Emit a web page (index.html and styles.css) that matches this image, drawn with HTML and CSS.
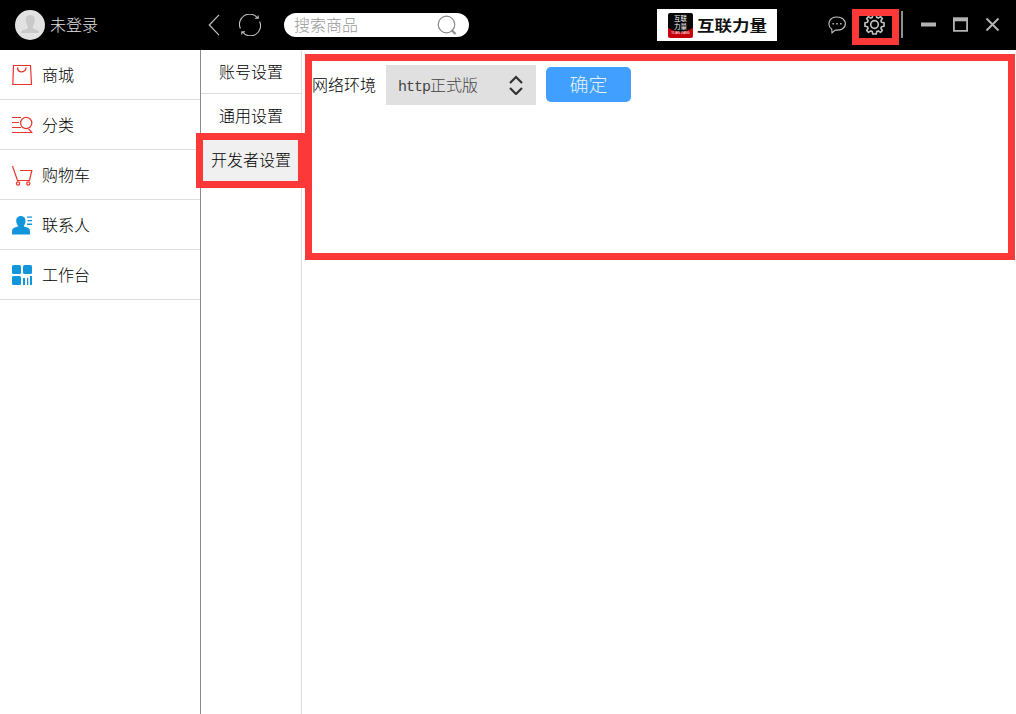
FILE: index.html
```html
<!DOCTYPE html>
<html lang="zh-CN">
<head>
<meta charset="utf-8">
<title>互联力量</title>
<link rel="stylesheet" href="styles.css">
</head>
<body>
<div class="app">
  <header class="topbar">
    <div class="user">
      <svg class="avatar" width="30" height="30" viewBox="0 0 30 30"><circle cx="15" cy="15" r="15" fill="#e2e2e2"/><path d="M10.800 9.500C10.800 3.500 19.800 3.500 19.800 9.500C19.800 12.500 19 14.500 17.800 16V18.500L22.500 20.200Q24 21 24 23H6Q6 21 7.500 20.200L12.800 18.500V16C11.600 14.500 10.800 12.500 10.800 9.500Z" fill="#c9c9c9"/></svg>
      <span class="text">未登录</span>
    </div>
    <svg class="back" width="12" height="22" viewBox="0 0 12 22"><path d="M11 .8L1.300 11L11 21.200" fill="none" stroke="#c4c4c4" stroke-width="1.200"/></svg>
    <svg class="refresh" width="22" height="22" viewBox="0 0 22 22" fill="none" stroke="#c4c4c4" stroke-width="1.100"><path d="M1.400 14.500A10.100 10.100 0 0 1 18.500 4M20.600 7.500A10.100 10.100 0 0 1 3.500 18M16 4.200H19.200V1.500M6 17.800H2.800V20.500"/></svg>
    <div class="search">
      <span class="text">搜索商品</span>
      <svg width="20" height="20" viewBox="0 0 20 20" fill="none" stroke="#8b8b8b"><circle cx="9.500" cy="9.500" r="8.300" stroke-width="1.200"/><path d="M14.500 15L18.500 19" stroke-width="2.200"/></svg>
    </div>
    <div class="brand">
      <div class="badge"><span>互联</span><span>力量</span><small>YLIAN JIANG</small></div>
      <strong>互联力量</strong>
    </div>
    <svg class="chat" width="18" height="18" viewBox="0 0 18 18"><path d="M3.800 13.200C-1.200 9.500 .4 1 9 1C14 1 17.400 4 17.400 7.600C17.400 12.500 12.500 14.800 7.300 14L4 16.800Z" fill="none" stroke="#c4c4c4" stroke-width="1.100"/><path d="M4.500 7h1.400v1.400H4.500zM8.300 7h1.400v1.400H8.300zM12.100 7h1.400v1.400h-1.400z" fill="#c4c4c4"/></svg>
    <div class="gear">
      <svg width="21" height="21" viewBox="0 0 22 22" fill="none" stroke="#c0c0c0" stroke-width="1.700" stroke-linejoin="round"><path d="M9.200 1h3.600l.6 2.700 1.500.6L17.300 2.800 19.200 4.700 17.700 7.100 18.300 8.600 21 9.200v3.600l-2.700.6-.6 1.500 1.500 2.400-1.900 1.900-2.400-1.500-1.500.6-.6 2.700H9.200l-.6-2.700-1.500-.6-2.400 1.500-1.900-1.900 1.500-2.400-.6-1.500L1 12.800V9.200l2.700-.6.6-1.500L2.800 4.700 4.700 2.800 7.100 4.300l1.500-.6z"/><circle cx="11" cy="11" r="4"/></svg>
    </div>
    <i class="divider"></i>
    <svg class="winbtns" width="80" height="16" viewBox="0 0 80 16" fill="none" stroke="#b3b3b3"><path d="M0 7.500H15" stroke-width="4"/><path d="M32.900 2V13.800H46.100V2" stroke-width="1.800"/><path d="M32 2.300H47" stroke-width="4"/><path d="M65.500 1.500L77.500 13.500M77.500 1.500L65.500 13.500" stroke-width="2"/></svg>
  </header>
  <div class="body">
    <nav class="sidebar">
      <a class="item"><svg class="line" width="22" height="22" viewBox="0 0 22 22"><path d="M2.500 1.500H18.500L19.500 20.500H.8L1.500 1.500Z"/><path d="M5.500 4.500C6.500 9 12.500 9 14 4.500M5 4h1.500M13.200 4h1.500"/></svg><span class="text">商城</span></a>
      <a class="item"><svg class="line" width="22" height="22" viewBox="0 0 22 22"><circle cx="14.200" cy="9" r="5.600"/><path d="M0 3.500H9M0 8.500H7M0 13.500H9M0 18.500H20.500M16.500 15L19.500 18"/></svg><span class="text">分类</span></a>
      <a class="item"><svg class="line" width="22" height="22" viewBox="0 0 22 22"><path d="M.5 2L5.500 16.500H17.500L19.800 6.500H8"/><circle cx="6" cy="19.500" r="1.600"/><circle cx="16.300" cy="19.500" r="1.600"/></svg><span class="text">购物车</span></a>
      <a class="item"><svg class="solid" width="22" height="22" viewBox="0 0 22 22"><path d="M4.200 6.500C4.200 .4 13.500 .4 13.500 6.500C13.500 9 12.800 10.500 12 11.500V12.500L16 13.800Q18 14.500 18 17V20.500H0V17Q0 14.500 2 13.800L6 12.500V11.500C5 10.500 4.200 9 4.200 6.500ZM15 2.500h5v1.300h-5zM15.500 6H20v1.300h-4.500zM15 9.500h5v1.500h-5z"/></svg><span class="text">联系人</span></a>
      <a class="item"><svg class="solid" width="22" height="22" viewBox="0 0 22 22"><rect y="1" width="9" height="9" rx="1.500"/><rect x="11" y="1" width="9" height="9" rx="1.500"/><rect y="12" width="9" height="9" rx="1.500"/><path d="M11 14h2v7h-2zM15 14h1.300v7H15zM18 12h2v9h-2z"/></svg><span class="text">工作台</span></a>
    </nav>
    <nav class="submenu">
      <a class="sub"><span class="text">账号设置</span></a>
      <a class="sub"><span class="text">通用设置</span></a>
      <a class="sub active"><span class="text">开发者设置</span></a>
    </nav>
    <main class="content">
      <label>网络环境</label>
      <div class="select"><span class="text"><span class="latin">http</span>正式版</span><svg width="14" height="20" viewBox="0 0 14 20" fill="none" stroke="#333" stroke-width="2.200"><path d="M1 8L7 2L13 8M1 13L7 19L13 13"/></svg></div>
      <button class="ok">确定</button>
    </main>
  </div>
  <div class="mark mark-gear"></div>
  <div class="mark mark-sub"></div>
  <div class="mark mark-main"></div>
</div>
</body>
</html>
```
FILE: styles.css
```css
* { box-sizing: border-box; }
body { margin: 0; }
.app {
  position: relative;
  width: 1016px;
  height: 714px;
  overflow: hidden;
  display: flex;
  flex-direction: column;
  background: #fff;
  color: #000;
  font: 300 16px/22px "Noto Sans CJK SC", sans-serif;
}
svg { display: block; flex: none; }
.text { padding-bottom: 2px; }
.topbar { height: 50px; flex: none; display: flex; align-items: center; background: #000; }
.user { display: flex; align-items: center; gap: 5px; width: 208px; padding-left: 15px; color: #e0e0e0; }
.refresh { margin-left: 19px; }
.search {
  width: 185px;
  height: 24px;
  margin-left: 23px;
  padding: 0 12px 0 10px;
  display: flex;
  align-items: center;
  justify-content: space-between;
  border-radius: 12px;
  background: #fff;
  color: #999;
}
.brand {
  width: 120px;
  height: 32px;
  margin-left: 188px;
  padding-left: 11px;
  display: flex;
  align-items: center;
  gap: 4px;
  background: #fff;
  color: #111;
}
.brand strong { font-size: 17.500px; font-weight: 700; line-height: 24px; white-space: nowrap; transform: scaleY(.85); }
.badge {
  width: 25px;
  height: 25px;
  padding-top: 1px;
  display: flex;
  flex-direction: column;
  align-items: center;
  overflow: hidden;
  border-radius: 2px;
  background: radial-gradient(ellipse 20px 19px at 50% 0, #080808 97%, #c4000b 100%);
  color: #fff;
  font-size: 6.500px;
  font-weight: 400;
  line-height: 8px;
}
.badge small { margin-top: 1px; font: 3px/5px "Liberation Sans", sans-serif; white-space: nowrap; }
.chat { margin-left: 51px; }
.gear { width: 47px; margin-left: 6px; padding: 0 2px 1px 0; display: flex; justify-content: center; }
.divider { width: 2px; height: 27px; margin: 0 0 1px 2px; background: #8e8e8e; }
.winbtns { margin-left: 18px; }
.body { flex: 1; display: flex; min-height: 0; }
.sidebar { width: 201px; border-right: 1px solid #8b8b8b; }
.item { height: 50px; padding-left: 12px; display: flex; align-items: center; gap: 8px; border-bottom: 1px solid #ddd; }
.line { fill: none; stroke: #e8352c; stroke-width: 1.200; }
.solid { fill: #1296db; }
.submenu { width: 101px; border-right: 1px solid #ddd; }
.sub { height: 44px; display: flex; align-items: center; justify-content: center; border-bottom: 1px solid #ddd; }
.active { background: #f0f0f0; }
.content { flex: 1; display: flex; align-items: flex-start; padding: 15px 0 0 10px; }
.content label { line-height: 38px; }
.select {
  width: 150px;
  height: 40px;
  margin-left: 10px;
  padding: 0 13px 0 12px;
  display: flex;
  align-items: center;
  justify-content: space-between;
  background: #e0e0e0;
  color: #444;
}
.select .text { display: block; height: 24px; line-height: 22px; }
.latin { font: 15px/20px "Liberation Mono", monospace; letter-spacing: -1px; }
.ok {
  width: 85px;
  height: 35px;
  margin: 2px 0 0 10px;
  padding: 0 0 2px;
  border: 0;
  border-radius: 5px;
  background: #409fff;
  color: #e4f1ff;
  font: 300 19px/33px "Noto Sans CJK SC", sans-serif;
}
.mark { position: absolute; border: 7px solid #fd3838; pointer-events: none; }
.mark-gear { left: 852px; top: 9px; width: 47px; height: 36px; }
.mark-sub { left: 196px; top: 133px; width: 109px; height: 55px; }
.mark-main { left: 305px; top: 54px; width: 710px; height: 206px; }
```
